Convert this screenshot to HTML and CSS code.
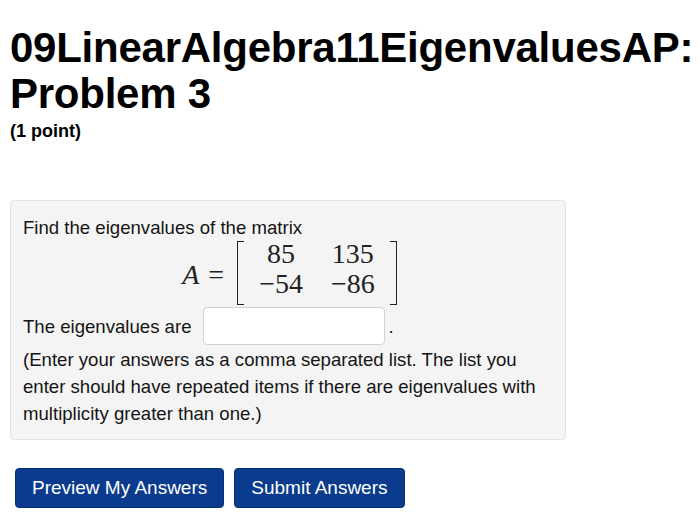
FILE: index.html
```html
<!DOCTYPE html>
<html>
<head>
<meta charset="utf-8">
<link rel="stylesheet" href="styles.css">
</head>
<body>
<div class="page">
  <h1 class="title">09LinearAlgebra11EigenvaluesAP: Problem 3</h1>
  <div class="points">(1 point)</div>
  <div class="problem">
    <p class="line">Find the eigenvalues of the matrix</p>
    <div class="equation">
      <span class="var">A</span>
      <span class="eq">=</span>
      <span class="bracket left"></span>
      <div class="matrix">
        <span>85</span><span>135</span>
        <span>&minus;54</span><span>&minus;86</span>
      </div>
      <span class="bracket right"></span>
    </div>
    <div class="answer-row">
      <span>The eigenvalues are</span>
      <span class="input"></span>
      <span class="dot">.</span>
    </div>
    <p class="note">(Enter your answers as a comma separated list. The list you enter should have repeated items if there are eigenvalues with multiplicity greater than one.)</p>
  </div>
  <div class="buttons">
    <button class="btn">Preview My Answers</button>
    <button class="btn">Submit Answers</button>
  </div>
</div>
</body>
</html>
```

FILE: styles.css
```css
html, body {
  margin: 0;
  padding: 0;
  background: #ffffff;
}
body {
  font-family: "Liberation Sans", Arial, sans-serif;
  color: #111;
}
.page {
  padding: 25px 10px 0 10px;
}
.title {
  margin: 0;
  font-size: 42px;
  line-height: 46px;
  font-weight: bold;
  letter-spacing: -0.25px;
  color: #000;
}
.points {
  margin-top: 4px;
  font-size: 18px;
  line-height: 20px;
  font-weight: bold;
  color: #000;
}
.problem {
  margin-top: 59px;
  width: 530px;
  background: #f4f4f4;
  border: 1px solid #e1e1e1;
  border-radius: 4px;
  padding: 13px 12px 12px 12px;
  font-size: 18.6px;
  line-height: 27px;
  color: #151515;
}
.line {
  margin: 0;
}
.equation {
  display: flex;
  justify-content: center;
  align-items: center;
  height: 64px;
  padding-left: 3px;
  font-family: "Liberation Serif", "Times New Roman", serif;
  font-size: 28px;
  color: #222;
}
.var {
  font-style: italic;
  line-height: 30px;
  margin-top: 4px;
}
.eq {
  line-height: 30px;
  margin: 4px 13px 0 9px;
}
.bracket {
  align-self: stretch;
  width: 6px;
  border-top: 1.5px solid #222;
  border-bottom: 1.5px solid #222;
}
.bracket.left {
  border-left: 1.5px solid #222;
}
.bracket.right {
  border-right: 1.5px solid #222;
}
.matrix {
  align-self: flex-start;
  display: grid;
  grid-template-columns: auto auto;
  column-gap: 28px;
  row-gap: 4px;
  padding: 0 15px;
  line-height: 26px;
  text-align: center;
}
.answer-row {
  display: flex;
  align-items: center;
  height: 40px;
  margin-top: 1px;
}
.input {
  display: block;
  width: 180px;
  height: 36px;
  margin-left: 11px;
  background: #fff;
  border: 1px solid #d2d2d2;
  border-radius: 4px;
}
.dot {
  margin-left: 4px;
}
.note {
  margin: 0;
}
.buttons {
  display: flex;
  gap: 10px;
  margin-top: 28px;
  margin-left: 5px;
}
.btn {
  height: 40px;
  padding: 0 16px;
  background: #0b3b8d;
  color: #fff;
  border: 1px solid #082f75;
  border-radius: 4px;
  font-family: "Liberation Sans", Arial, sans-serif;
  font-size: 19px;
}
```
